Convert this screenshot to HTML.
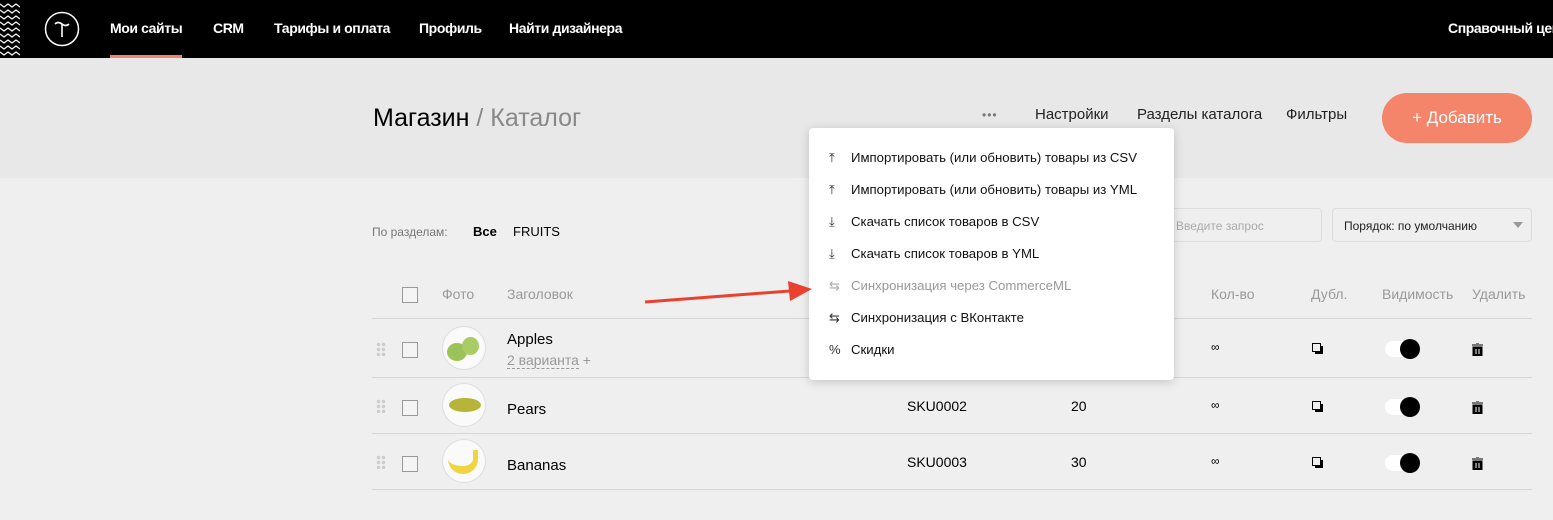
<!DOCTYPE html><html><head><meta charset="utf-8"><style>
*{margin:0;padding:0;box-sizing:border-box}
body{width:1553px;height:520px;overflow:hidden;background:#efefef;font-family:"Liberation Sans","DejaVu Sans",sans-serif;position:relative;color:#000}
.a{position:absolute;white-space:nowrap}
.hdr{position:absolute;left:0;top:0;width:1553px;height:58px;background:#000}
.nav{color:#fff;font-weight:bold;font-size:14px;top:20px;letter-spacing:-0.4px}
.band{position:absolute;left:0;top:58px;width:1553px;height:120px;background:#e8e8e8}
.line{position:absolute;left:372px;width:1160px;height:1px;background:#d6d6d6}
.cb{position:absolute;width:16px;height:16px;border:1px solid #999;background:#f4f4f4}
.th{color:#999;font-size:14px;top:286px}
.img{position:absolute;width:44px;height:44px;border-radius:50%;background:#fafafa;border:1px solid #ddd}
.dots{position:absolute;width:10px;height:14px;background:radial-gradient(circle,#ccc 1.5px,transparent 2px) 0 0/5px 5px}
.tog{position:absolute;width:34px;height:16px;border-radius:8px;background:#fff}
.tog:after{content:"";position:absolute;right:-1px;top:-2px;width:20px;height:20px;border-radius:50%;background:#000}
.menu{position:absolute;left:809px;top:128px;width:365px;height:252px;background:#fff;border-radius:4px;box-shadow:0 2px 10px rgba(0,0,0,.18)}
.mi{position:absolute;left:42px;font-size:13.2px;color:#111}
.ic{position:absolute;left:20px;font-size:13px;color:#333}
</style></head><body>
<div class="hdr"></div>
<svg class="a" style="left:0;top:0" width="20" height="58"><g fill="none" stroke="#fff" stroke-width="1.2">
<path d="M0 4l4 3 4-3 4 3 4-3 4 3"/><path d="M0 10l4 3 4-3 4 3 4-3 4 3"/><path d="M0 16l4 3 4-3 4 3 4-3 4 3"/><path d="M0 22l4 3 4-3 4 3 4-3 4 3"/><path d="M0 28l4 3 4-3 4 3 4-3 4 3"/><path d="M0 34l4 3 4-3 4 3 4-3 4 3"/><path d="M0 40l4 3 4-3 4 3 4-3 4 3"/><path d="M0 46l4 3 4-3 4 3 4-3 4 3"/><path d="M0 52l4 3 4-3 4 3 4-3 4 3"/></g></svg>
<svg class="a" style="left:44px;top:11px" width="36" height="36"><circle cx="18" cy="18" r="16.5" fill="none" stroke="#fff" stroke-width="1.5"/><path d="M11 13q3-3 7 0t7 0M18 13v13" fill="none" stroke="#fff" stroke-width="1.6"/></svg>
<div class="a nav" style="left:110px">Мои сайты</div>
<div class="a" style="left:110px;top:55px;width:72px;height:3px;background:#f4846a"></div>
<div class="a nav" style="left:213px">CRM</div>
<div class="a nav" style="left:274px">Тарифы и оплата</div>
<div class="a nav" style="left:419px">Профиль</div>
<div class="a nav" style="left:509px">Найти дизайнера</div>
<div class="a nav" style="left:1448px">Справочный центр</div>
<div class="band"></div>
<div class="a" style="left:373px;top:104px;font-size:25px;color:#000">Магазин <span style="color:#888">/ Каталог</span></div>
<div class="a" style="left:982px;top:108px;font-size:12px;color:#777;letter-spacing:1px">•••</div>
<div class="a" style="left:1035px;top:106px;font-size:15px;color:#222">Настройки</div>
<div class="a" style="left:1137px;top:106px;font-size:15px;color:#222">Разделы каталога</div>
<div class="a" style="left:1286px;top:106px;font-size:15px;color:#222">Фильтры</div>
<div class="a" style="left:1382px;top:93px;width:150px;height:50px;border-radius:25px;background:#f4846a;color:#fff;font-size:17px;line-height:50px;text-align:center">+ Добавить</div>
<div class="a" style="left:372px;top:225px;font-size:12px;color:#777">По разделам:</div>
<div class="a" style="left:473px;top:224px;font-size:13px;font-weight:bold">Все</div>
<div class="a" style="left:513px;top:224px;font-size:13px">FRUITS</div>
<div class="a" style="left:1160px;top:208px;width:162px;height:34px;border:1px solid #ddd;border-radius:4px;font-size:12px;color:#aaa;padding:10px 0 0 15px">Введите запрос</div>
<div class="a" style="left:1332px;top:208px;width:200px;height:34px;border:1px solid #ddd;border-radius:4px;font-size:12px;color:#222;padding:10px 0 0 11px">Порядок: по умолчанию<span style="position:absolute;right:8px;top:13px;border:5px solid transparent;border-top:6px solid #999"></span></div>
<div class="cb" style="left:402px;top:287px"></div>
<div class="a th" style="left:442px">Фото</div>
<div class="a th" style="left:507px">Заголовок</div>
<div class="a th" style="left:1211px">Кол-во</div>
<div class="a th" style="left:1311px">Дубл.</div>
<div class="a th" style="left:1382px">Видимость</div>
<div class="a th" style="left:1472px">Удалить</div>
<div class="line" style="top:318px"></div>
<div class="line" style="top:377px"></div>
<div class="line" style="top:433px"></div>
<div class="line" style="top:489px"></div>
<div class="dots" style="left:376px;top:342px"></div><div class="dots" style="left:376px;top:399px"></div><div class="dots" style="left:376px;top:455px"></div>
<div class="cb" style="left:402px;top:342px"></div><div class="cb" style="left:402px;top:400px"></div><div class="cb" style="left:402px;top:456px"></div>
<div class="img" style="left:442px;top:326px"><div style="position:absolute;left:4px;top:16px;width:20px;height:18px;border-radius:50%;background:#9bc35a"></div><div style="position:absolute;left:19px;top:10px;width:17px;height:18px;border-radius:50%;background:#a8cc66"></div></div>
<div class="img" style="left:442px;top:383px"><div style="position:absolute;left:6px;top:14px;width:32px;height:14px;border-radius:50%;background:#b7b43a"></div></div>
<div class="img" style="left:442px;top:439px"><div style="position:absolute;left:5px;top:10px;width:30px;height:24px;border-radius:0 0 20px 20px;border-bottom:8px solid #f0d440;border-right:5px solid #f0d440"></div></div>
<div class="a" style="left:507px;top:331px;font-size:15px">Apples</div>
<div class="a" style="left:507px;top:352px;font-size:14px;color:#999"><span style="border-bottom:1px dashed #999">2 варианта</span> +</div>
<div class="a" style="left:507px;top:401px;font-size:15px">Pears</div>
<div class="a" style="left:507px;top:457px;font-size:15px">Bananas</div>
<div class="a" style="left:907px;top:398px;font-size:14px">SKU0002</div>
<div class="a" style="left:907px;top:454px;font-size:14px">SKU0003</div>
<div class="a" style="left:1071px;top:398px;font-size:14px">20</div>
<div class="a" style="left:1071px;top:454px;font-size:14px">30</div>
<div class="a" style="left:1211px;top:340px;font-size:12px">∞</div><div class="a" style="left:1211px;top:398px;font-size:12px">∞</div><div class="a" style="left:1211px;top:454px;font-size:12px">∞</div>
<svg class="a" style="left:1312px;top:343px" width="12" height="12"><rect x="0.5" y="0.5" width="8" height="8" fill="none" stroke="#000"/><path d="M10 3v7H3" fill="none" stroke="#000" stroke-width="2"/></svg>
<svg class="a" style="left:1312px;top:401px" width="12" height="12"><rect x="0.5" y="0.5" width="8" height="8" fill="none" stroke="#000"/><path d="M10 3v7H3" fill="none" stroke="#000" stroke-width="2"/></svg>
<svg class="a" style="left:1312px;top:457px" width="12" height="12"><rect x="0.5" y="0.5" width="8" height="8" fill="none" stroke="#000"/><path d="M10 3v7H3" fill="none" stroke="#000" stroke-width="2"/></svg>
<div class="tog" style="left:1385px;top:341px"></div><div class="tog" style="left:1385px;top:399px"></div><div class="tog" style="left:1385px;top:455px"></div>
<svg class="a" style="left:1472px;top:343px" width="11" height="13"><path d="M0 2h11M4 0h3M1 4h9v9H1z" stroke="#000" fill="#000"/><path d="M4 6v5M7 6v5" stroke="#fff"/></svg>
<svg class="a" style="left:1472px;top:401px" width="11" height="13"><path d="M0 2h11M4 0h3M1 4h9v9H1z" stroke="#000" fill="#000"/><path d="M4 6v5M7 6v5" stroke="#fff"/></svg>
<svg class="a" style="left:1472px;top:457px" width="11" height="13"><path d="M0 2h11M4 0h3M1 4h9v9H1z" stroke="#000" fill="#000"/><path d="M4 6v5M7 6v5" stroke="#fff"/></svg>
<div class="menu">
<div class="ic" style="top:22px">⤒</div><div class="mi" style="top:22px">Импортировать (или обновить) товары из CSV</div>
<div class="ic" style="top:54px">⤒</div><div class="mi" style="top:54px">Импортировать (или обновить) товары из YML</div>
<div class="ic" style="top:86px">⤓</div><div class="mi" style="top:86px">Скачать список товаров в CSV</div>
<div class="ic" style="top:118px">⤓</div><div class="mi" style="top:118px">Скачать список товаров в YML</div>
<div class="ic" style="top:150px;color:#aaa">⇆</div><div class="mi" style="top:150px;color:#999">Синхронизация через CommerceML</div>
<div class="ic" style="top:182px">⇆</div><div class="mi" style="top:182px">Синхронизация с ВКонтакте</div>
<div class="ic" style="top:214px">%</div><div class="mi" style="top:214px">Скидки</div>
</div>
<svg class="a" style="left:640px;top:278px" width="175" height="30"><line x1="5" y1="24" x2="150" y2="13" stroke="#e8412f" stroke-width="3"/><path d="M148 3L172 11 150 23z" fill="#e8412f"/></svg>
</body></html>
